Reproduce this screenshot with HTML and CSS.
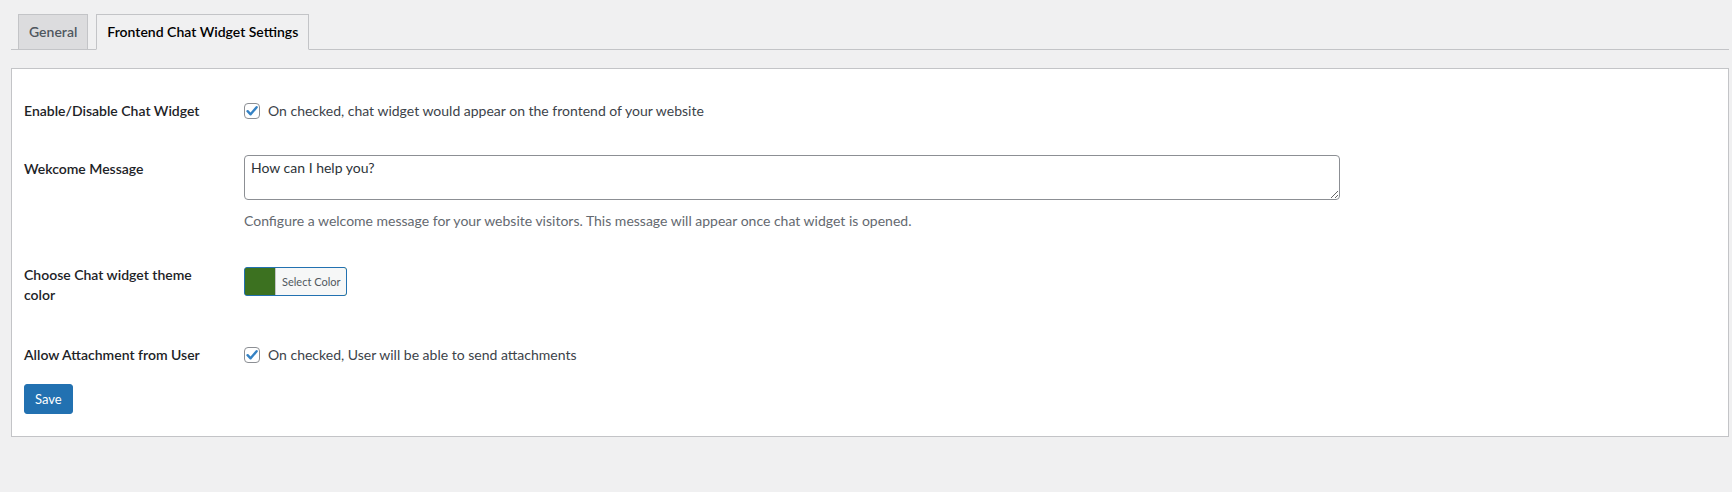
FILE: index.html
```html
<!DOCTYPE html>
<html lang="en">
<head>
<meta charset="utf-8">
<title>Chat Widget Settings</title>
<link rel="stylesheet" href="styles.css">
</head>
<body>
<div class="wrap">
  <nav class="nav-tabs">
    <a class="nav-tab" href="#">General</a>
    <a class="nav-tab nav-tab-active" href="#">Frontend Chat Widget Settings</a>
  </nav>

  <div class="panel">
    <div class="row">
      <div class="th">Enable/Disable Chat Widget</div>
      <div class="td">
        <label class="check-line">
          <span class="checkbox"><svg viewBox="0 0 16 16" width="16" height="16"><path d="M3.6 8.2 L6.6 11.3 L12.6 4.2" fill="none" stroke="#3582c4" stroke-width="2.4" stroke-linecap="round" stroke-linejoin="round"/></svg></span>
          <span>On checked, chat widget would appear on the frontend of your website</span>
        </label>
      </div>
    </div>

    <div class="row">
      <div class="th">Wekcome Message</div>
      <div class="td">
        <textarea class="message">How can I help you?</textarea>
        <p class="description">Configure a welcome message for your website visitors. This message will appear once chat widget is opened.</p>
      </div>
    </div>

    <div class="row">
      <div class="th">Choose Chat widget theme color</div>
      <div class="td td-color">
        <button class="color-result" type="button"><span class="swatch"></span><span class="color-text">Select Color</span></button>
      </div>
    </div>

    <div class="row">
      <div class="th">Allow Attachment from User</div>
      <div class="td">
        <label class="check-line">
          <span class="checkbox"><svg viewBox="0 0 16 16" width="16" height="16"><path d="M3.6 8.2 L6.6 11.3 L12.6 4.2" fill="none" stroke="#3582c4" stroke-width="2.4" stroke-linecap="round" stroke-linejoin="round"/></svg></span>
          <span>On checked, User will be able to send attachments</span>
        </label>
      </div>
    </div>

    <div class="submit">
      <button class="button-primary" type="button">Save</button>
    </div>
  </div>
</div>
</body>
</html>
```
FILE: styles.css
```css
html, body {
  margin: 0;
  padding: 0;
  background: #f0f0f1;
}
body {
  font-family: Lato, "Liberation Sans", sans-serif;
  font-size: 14px;
  color: #3c434a;
}
.wrap {
  margin: 0 3px 0 11px;
}
.nav-tabs {
  display: flex;
  align-items: flex-end;
  padding-top: 14px;
  border-bottom: 1px solid #c3c4c7;
}
.nav-tab {
  display: block;
  margin: 0 0 -1px 7px;
  padding: 5px 10px;
  border: 1px solid #c3c4c7;
  background: #dcdcde;
  color: #50575e;
  font-size: 14px;
  font-weight: 600;
  line-height: 24px;
  text-decoration: none;
  white-space: nowrap;
}
.nav-tab + .nav-tab {
  margin-left: 8px;
}
.nav-tab-active {
  background: #f0f0f1;
  color: #000;
  border-bottom-color: #f0f0f1;
}
.panel {
  margin-top: 18px;
  background: #fff;
  border: 1px solid #c3c4c7;
  padding: 13px 12px 22px 12px;
}
.row {
  display: flex;
  align-items: flex-start;
}
.th {
  width: 185px;
  flex: 0 0 185px;
  padding: 19px 35px 19px 0;
  color: #1d2327;
  font-weight: 600;
  line-height: 20px;
}
.td {
  flex: 1 1 auto;
  padding: 15px 0;
}
.td-color {
  padding: 21px 0 30px;
}
.check-line {
  display: flex;
  align-items: center;
  min-height: 28px;
  line-height: 20px;
}
.checkbox {
  box-sizing: border-box;
  width: 16px;
  height: 16px;
  flex: 0 0 16px;
  margin-right: 8px;
  border: 1px solid #8c8f94;
  border-radius: 4px;
  background: #fff;
  display: flex;
  align-items: center;
  justify-content: center;
}
.checkbox svg {
  display: block;
  margin: -1px;
}
.message {
  display: block;
  box-sizing: border-box;
  width: 1096px;
  height: 45px;
  margin: 0;
  padding: 2px 6px;
  border: 1px solid #8c8f94;
  border-radius: 4px;
  background: #fff;
  color: #2c3338;
  font-family: Lato, "Liberation Sans", sans-serif;
  font-size: 14px;
  line-height: 20px;
  resize: both;
}
.description {
  margin: 10px 0 0;
  color: #646970;
  line-height: 21px;
}
.color-result {
  display: flex;
  box-sizing: border-box;
  height: 29px;
  margin: 0;
  padding: 0;
  border: 1px solid #2271b1;
  border-radius: 3px;
  background: #3c7120;
  overflow: hidden;
  cursor: pointer;
}
.swatch {
  display: block;
  width: 30px;
  background: #3c7120;
}
.color-text {
  display: block;
  padding: 0 6px;
  border-left: 1px solid #c3c4c7;
  background: #f6f7f7;
  color: #50575e;
  font-family: Lato, "Liberation Sans", sans-serif;
  font-size: 11px;
  line-height: 27px;
}
.submit {
  padding: 0;
}
.button-primary {
  display: block;
  box-sizing: border-box;
  height: 30px;
  margin: 0;
  padding: 0 10px;
  border: 1px solid #2271b1;
  border-radius: 3px;
  background: #2271b1;
  color: #fff;
  font-family: Lato, "Liberation Sans", sans-serif;
  font-size: 13px;
  line-height: 28px;
  cursor: pointer;
}
```
